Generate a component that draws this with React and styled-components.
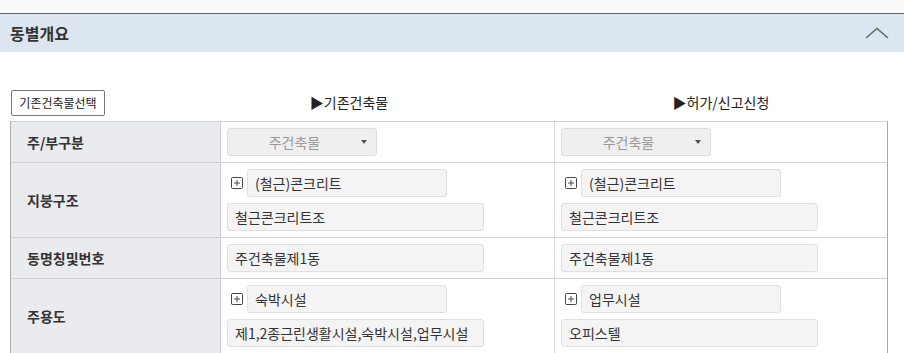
import React from 'react';
import styled, { createGlobalStyle } from 'styled-components';

const GlobalStyle = createGlobalStyle`
  html, body {
    margin: 0;
    padding: 0;
    background: #ffffff;
    font-family: "Noto Sans CJK KR", "Noto Sans", sans-serif;
    color: #333333;
  }
`;

const rows = [
  {
    label: '주/부구분',
    type: 'select',
    values: ['주건축물', '주건축물'],
  },
  {
    label: '지붕구조',
    type: 'double',
    values: [
      ['(철근)콘크리트', '철근콘크리트조'],
      ['(철근)콘크리트', '철근콘크리트조'],
    ],
  },
  {
    label: '동명칭및번호',
    type: 'input',
    values: ['주건축물제1동', '주건축물제1동'],
  },
  {
    label: '주용도',
    type: 'double',
    values: [
      ['숙박시설', '제1,2종근린생활시설,숙박시설,업무시설'],
      ['업무시설', '오피스텔'],
    ],
  },
];

const PlusIcon = () => (
  <svg width="12" height="12" viewBox="0 0 12 12">
    <rect x="0.5" y="0.5" width="11" height="11" rx="1" fill="#fff" stroke="#444" />
    <path d="M3 6h6M6 3v6" stroke="#444" strokeWidth="1" />
  </svg>
);

const ChevronUp = () => (
  <svg width="24" height="12" viewBox="0 0 24 12">
    <path d="M1 11L12 1.5L23 11" fill="none" stroke="#666" strokeWidth="1.6" />
  </svg>
);

const renderValue = (row, value) => {
  if (row.type === 'select') {
    return (
      <Select>
        <SelectText>{value}</SelectText>
        <Caret />
      </Select>
    );
  }
  if (row.type === 'input') {
    return <Field $width={257}>{value}</Field>;
  }
  return (
    <Stack>
      <Line>
        <PlusIcon />
        <Field $width={200}>{value[0]}</Field>
      </Line>
      <Field $width={257}>{value[1]}</Field>
    </Stack>
  );
};

const App = () => {
  return (
    <>
      <GlobalStyle />
      <TopStrip />
      <SectionHeader>
        <Title>동별개요</Title>
        <ChevronUp />
      </SectionHeader>
      <Toolbar>
        <div>
          <PickButton>기존건축물선택</PickButton>
        </div>
        <ColumnTitle>▶기존건축물</ColumnTitle>
        <ColumnTitle>▶허가/신고신청</ColumnTitle>
      </Toolbar>
      <Grid>
        {rows.map((row) => (
          <React.Fragment key={row.label}>
            <LabelCell $tall={row.type === 'double'}>{row.label}</LabelCell>
            <ValueCell $tall={row.type === 'double'}>{renderValue(row, row.values[0])}</ValueCell>
            <ValueCell $tall={row.type === 'double'} $last>
              {renderValue(row, row.values[1])}
            </ValueCell>
          </React.Fragment>
        ))}
      </Grid>
    </>
  );
};

export default App;

const TopStrip = styled.div`
  height: 13px;
  background: #f9f9f9;
  border-bottom: 1px solid #5f6368;
`;

const SectionHeader = styled.div`
  display: flex;
  align-items: center;
  justify-content: space-between;
  height: 38px;
  padding: 0 15px 0 10px;
  background: #dce6f0;
`;

const Title = styled.h2`
  margin: 0;
  font-size: 16px;
  font-weight: 700;
  color: #333;
`;

const Toolbar = styled.div`
  display: grid;
  grid-template-columns: 134px 410px 334px;
  align-items: center;
  margin: 37px 0 6px 10px;
  width: 878px;
  height: 26px;
`;

const PickButton = styled.button`
  width: 94px;
  height: 26px;
  padding: 0;
  margin-left: 1px;
  border: 1px solid #777;
  border-radius: 2px;
  background: #fff;
  font-family: inherit;
  font-size: 12px;
  color: #222;
  cursor: pointer;
`;

const ColumnTitle = styled.div`
  text-align: center;
  font-size: 14px;
  color: #222;
`;

const Grid = styled.div`
  display: grid;
  grid-template-columns: 210px 334px 332px;
  width: 876px;
  margin-left: 10px;
  border-left: 1px solid #a9a9b0;
  border-right: 1px solid #a9a9b0;
  border-top: 1px solid #cfd0d6;
`;

const LabelCell = styled.div`
  display: flex;
  align-items: center;
  height: ${(props) => (props.$tall ? '74px' : '40px')};
  padding-left: 16px;
  background: #eaebee;
  border-right: 1px solid #cfd0d6;
  border-bottom: 1px solid #cfd0d6;
  font-size: 14px;
  font-weight: 700;
  color: #333;
`;

const ValueCell = styled.div`
  display: flex;
  align-items: center;
  height: ${(props) => (props.$tall ? '74px' : '40px')};
  padding-left: 6px;
  border-right: ${(props) => (props.$last ? 'none' : '1px solid #dcdde2')};
  border-bottom: 1px solid #cfd0d6;
`;

const Stack = styled.div`
  display: flex;
  flex-direction: column;
  gap: 6px;
`;

const Line = styled.div`
  display: flex;
  align-items: center;
  gap: 4px;
  padding-left: 4px;
`;

const Field = styled.div`
  box-sizing: border-box;
  display: flex;
  align-items: center;
  width: ${(props) => props.$width}px;
  height: 28px;
  padding: 0 7px;
  background: #f4f4f4;
  border: 1px solid #e0e0e0;
  border-radius: 3px;
  font-size: 14px;
  color: #333;
  white-space: nowrap;
  overflow: hidden;
`;

const Select = styled.div`
  box-sizing: border-box;
  display: flex;
  align-items: center;
  width: 150px;
  height: 28px;
  padding-right: 9px;
  background: #efefef;
  border: 1px solid #dddddd;
  border-radius: 3px;
`;

const SelectText = styled.span`
  flex: 1;
  text-align: center;
  font-size: 14px;
  color: #9a9a9a;
`;

const Caret = styled.span`
  width: 0;
  height: 0;
  border-left: 3.5px solid transparent;
  border-right: 3.5px solid transparent;
  border-top: 4px solid #555;
`;
